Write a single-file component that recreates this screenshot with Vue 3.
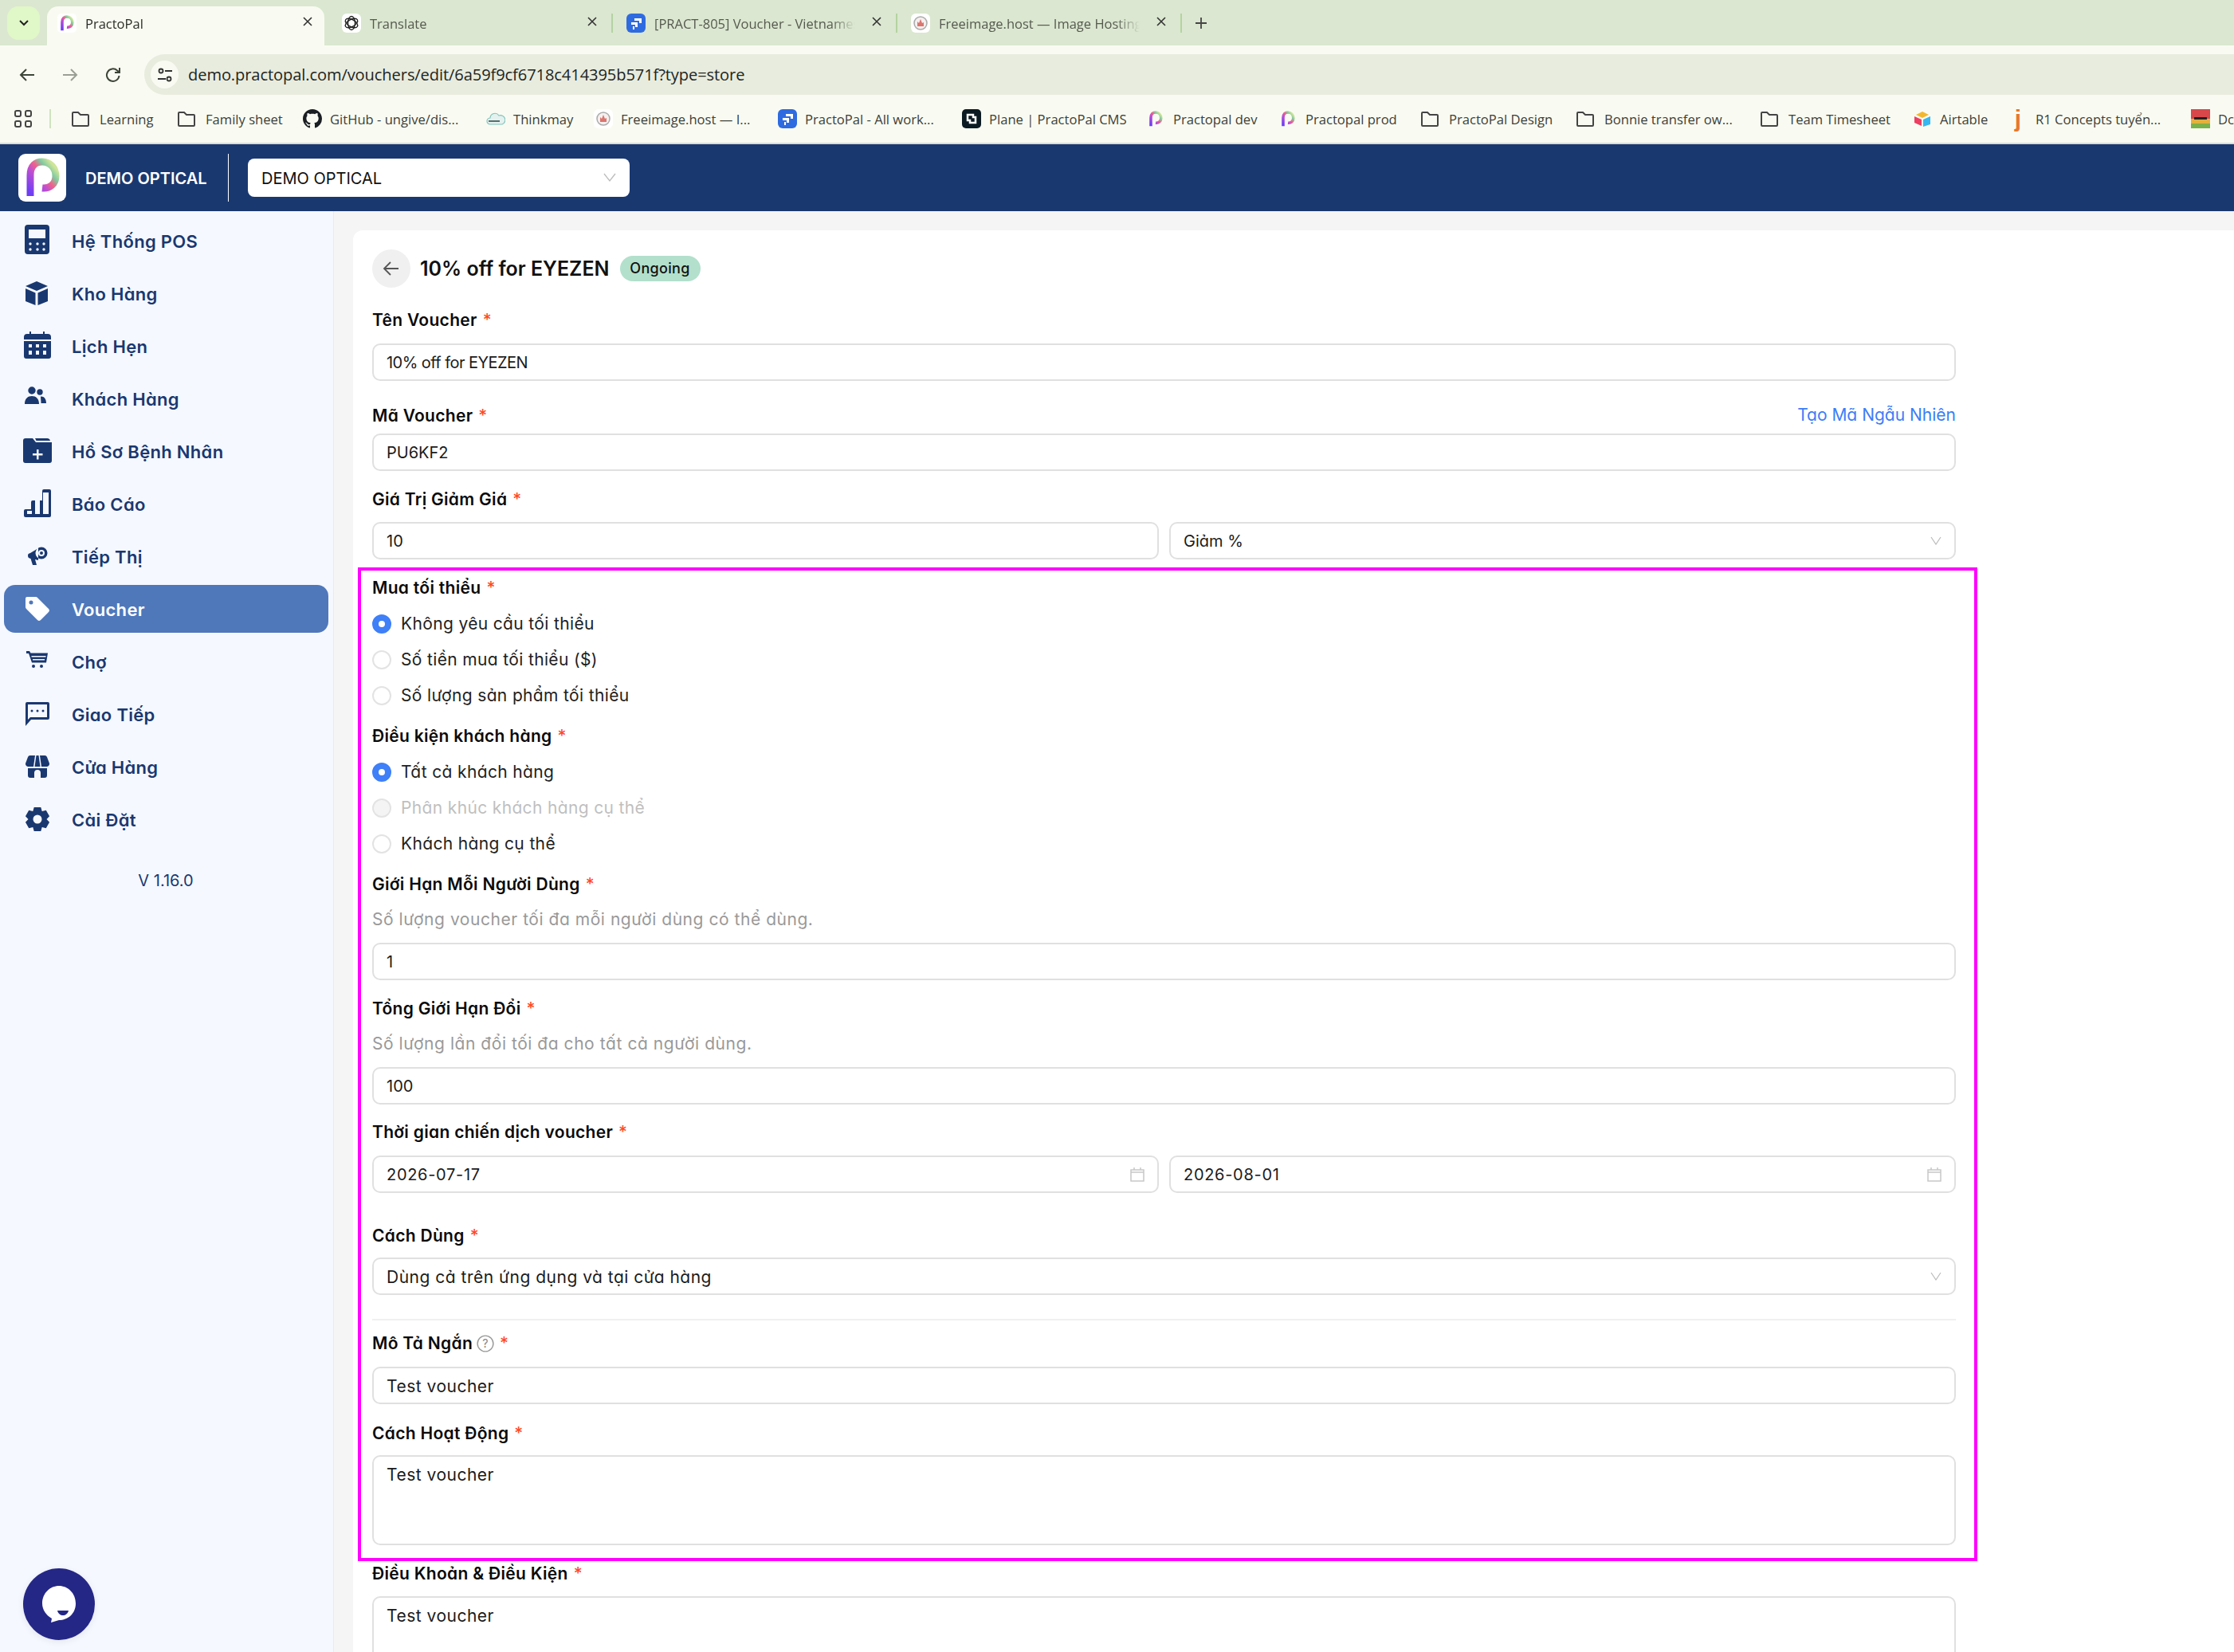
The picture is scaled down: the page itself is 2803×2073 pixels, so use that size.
<script setup>
const dot = (x, y, r) => `M${x - r} ${y}a${r} ${r} 0 1 0 ${2 * r} 0a${r} ${r} 0 1 0 ${-2 * r} 0z`
const gear = () => {
  const pts = []
  for (let i = 0; i < 6; i++) {
    const a = (i * Math.PI) / 3 - Math.PI / 2
    const w = 0.3
    const p = (r, t) => `${(20 + r * Math.cos(t)).toFixed(2)} ${(20 + r * Math.sin(t)).toFixed(2)}`
    pts.push(`${i ? 'L' : 'M'}${p(11.5, a - w - 0.22)}L${p(15.5, a - w + 0.02)}L${p(15.5, a + w - 0.02)}L${p(11.5, a + w + 0.22)}`)
  }
  return pts.join('') + 'z' + dot(20, 20, 5.5)
}
const nav = [
  { t: 'Hệ Thống POS', d: 'M8 0h23a4 4 0 0 1 4 4v29a4 4 0 0 1-4 4H8a4 4 0 0 1-4-4V4a4 4 0 0 1 4-4zM9 6h21v11H9z' + dot(11, 24, 1.7) + dot(20, 24, 1.7) + dot(28, 24, 1.7) + dot(11, 31, 1.7) + dot(20, 31, 1.7) + dot(28, 31, 1.7) },
  { t: 'Kho Hàng', d: 'M19 5L33 11L19 17L5 11zM5 14L17.5 19.5V35L5 30zM33 14L20.5 19.5V35L33 30z' },
  { t: 'Lịch Hẹn', d: 'M3 9a4 4 0 0 1 4-4h3V2h2v3h15V2h2v3h4a4 4 0 0 1 4 4v3H3zM3 14h34v19a3 3 0 0 1-3 3H6a3 3 0 0 1-3-3zM9 18v4h4v-4zM18 18v4h4v-4zM27 18v4h4v-4zM9 26v5h4v-5zM18 26v5h4v-5zM27 26v5h4v-5z' },
  { t: 'Khách Hàng', d: dot(13, 10, 4.7) + 'M4 27c0-7 4-10 9-10s9 3 9 10z' + dot(23, 12, 3.7) + 'M24 17.5c4-.5 7 2.5 7 8.5h-6.5c0-3-.5-6-.5-8.5z' },
  { t: 'Hồ Sơ Bệnh Nhân', d: 'M2 7a3 3 0 0 1 3-3h9l4 5h20v23a3 3 0 0 1-3 3H5a3 3 0 0 1-3-3zM19 18h2.500v5h5v2.500h-5v5H19v-5h-5V23h5zM17 4h15a4 4 0 0 1 4 3H18.500z' },
  { t: 'Báo Cáo', d: 'M26 4a2 2 0 0 1 2-2h7a2 2 0 0 1 2 2v31a2 2 0 0 1-2 2H5a2 2 0 0 1-2-2v-6a2 2 0 0 1 2-2h7v-9a2 2 0 0 1 2-2h12zM7 29v4h6v-4zM17 16v17h6V16zM27 6v27h7V6z' },
  { t: 'Tiếp Thị', d: 'M8 19c0-2 1-2.500 3-3L21 10v15L17 24l2 7h-5l-2.500-8L10 22.500C8.500 22 8 21 8 19z' + dot(25, 16, 7.5) + dot(25, 16, 4) + dot(25, 16, 2) },
  { t: 'Voucher', active: true, d: 'M7 5h11a3 3 0 0 1 2 1l14 14a3 3 0 0 1 0 4L24 34a3 3 0 0 1-4 0L6 20a3 3 0 0 1-1-2V7a2 2 0 0 1 2-2z' + dot(12, 12, 2.5) },
  { t: 'Chợ', d: 'M6 7h4l1.500 2.500H33l-2 12H13L9 10H6zM12.500 13h18v1.500h-18zM14 17h15v1.500H14z' + dot(15, 26, 2) + dot(25, 26, 2) },
  { t: 'Giao Tiếp', d: 'M7 5h26a2 2 0 0 1 2 2v18a2 2 0 0 1-2 2H12l-7 8V7a2 2 0 0 1 2-2zM8 8v19l3-3h21V8z' + dot(13, 16, 1.5) + dot(20, 16, 1.5) + dot(27, 16, 1.5) },
  { t: 'Cửa Hàng', d: 'M11 6h18a3 3 0 0 1 3 2l3 8a3.500 3.500 0 0 1-3.500 4h-23A3.500 3.500 0 0 1 5 16l3-8a3 3 0 0 1 3-2zM17 6h1.500l-2 14H15zM21.500 6H23l2 14h-1.500zM8 22h24v9a3 3 0 0 1-3 3H11a3 3 0 0 1-3-3zM16 34v-6a4 4 0 0 1 8 0v6z' },
  { t: 'Cài Đặt', d: gear() },
]
const tabs = [
  { t: 'PractoPal', i: 'p', active: true },
  { t: 'Translate', i: 'gpt' },
  { t: '[PRACT-805] Voucher - Vietnamese', i: 'jira' },
  { t: 'Freeimage.host — Image Hosting', i: 'free' },
]
const marks = [
  { t: 'Learning', i: 'folder', w: 133 },
  { t: 'Family sheet', i: 'folder', w: 158 },
  { t: 'GitHub - ungive/dis...', i: 'gh', w: 230 },
  { t: 'Thinkmay', i: 'think', w: 135 },
  { t: 'Freeimage.host — I...', i: 'free', w: 231 },
  { t: 'PractoPal - All work...', i: 'jira', w: 231 },
  { t: 'Plane | PractoPal CMS', i: 'plane', w: 231 },
  { t: 'Practopal dev', i: 'p', w: 166 },
  { t: 'Practopal prod', i: 'p', w: 178 },
  { t: 'PractoPal Design', i: 'folder', w: 195 },
  { t: 'Bonnie transfer ow...', i: 'folder', w: 231 },
  { t: 'Team Timesheet', i: 'folder', w: 192 },
  { t: 'Airtable', i: 'air', w: 120 },
  { t: 'R1 Concepts tuyển...', i: 'j', w: 229 },
  { t: 'Dc', i: 'dc', w: 50 },
]
</script>

<template>
  <div class="app">
    <svg class="defs" width="0" height="0" aria-hidden="true">
      <defs>
        <linearGradient id="pg" x1="0.1" y1="1" x2="0.9" y2="0.1">
          <stop offset="0" stop-color="#6d3df5" />
          <stop offset="0.42" stop-color="#c04fd0" />
          <stop offset="0.62" stop-color="#f0628a" />
          <stop offset="0.8" stop-color="#7fc9a0" />
          <stop offset="1" stop-color="#cfe59a" />
        </linearGradient>
        <symbol id="plogo" viewBox="0 0 60 60">
          <path d="M15 53V27C15 15 22 10 30 10C40 10 47 18 47 28C47 38 39 44 30 43" fill="none" stroke="url(#pg)" stroke-width="9" />
        </symbol>
        <symbol id="jira" viewBox="0 0 24 24">
          <rect width="24" height="24" rx="6" fill="#2f6be0" />
          <path d="M10 6h9v6h-3V9h-6zM6 11h8v6h-3v-3H6zM8 16h2v4H8z" fill="#fff" />
        </symbol>
        <symbol id="free" viewBox="0 0 24 24">
          <rect width="24" height="24" rx="6" fill="#fff" />
          <circle cx="12" cy="12" r="8" fill="#f6efef" stroke="#aaa" stroke-width="1.500" />
          <path d="M8 16V10l2 2 2-5 2 5 2-1v5z" fill="#d9766f" />
        </symbol>
        <symbol id="gpt" viewBox="0 0 24 24">
          <rect width="24" height="24" rx="6" fill="#fff" />
          <g fill="none" stroke="#222" stroke-width="1.400">
            <ellipse cx="12" cy="12" rx="4.500" ry="8.500" />
            <ellipse cx="12" cy="12" rx="4.500" ry="8.500" transform="rotate(60 12 12)" />
            <ellipse cx="12" cy="12" rx="4.500" ry="8.500" transform="rotate(120 12 12)" />
          </g>
        </symbol>
        <symbol id="folder" viewBox="0 0 24 24">
          <path d="M2 5a1 1 0 0 1 1-1h6l3 3h9a1 1 0 0 1 1 1v12a1 1 0 0 1-1 1H3a1 1 0 0 1-1-1z" fill="none" stroke="#444" stroke-width="2" />
        </symbol>
        <symbol id="gh" viewBox="0 0 16 16">
          <path fill="#1b1f24" d="M8 0C3.58 0 0 3.58 0 8c0 3.54 2.290 6.530 5.470 7.590.4.070.55-.17.55-.38 0-.19-.01-.82-.01-1.490-2.010.37-2.530-.49-2.690-.94-.09-.23-.48-.94-.82-1.130-.28-.15-.68-.52-.01-.53.63-.01 1.080.58 1.230.82.72 1.210 1.870.87 2.330.66.070-.52.28-.87.51-1.070-1.780-.2-3.640-.89-3.640-3.950 0-.87.31-1.590.82-2.150-.08-.2-.36-1.020.08-2.120 0 0 .67-.21 2.200.82.64-.18 1.320-.27 2-.27.68 0 1.360.09 2 .27 1.530-1.040 2.200-.82 2.200-.82.44 1.100.16 1.920.08 2.120.51.56.82 1.270.82 2.150 0 3.070-1.870 3.750-3.650 3.950.29.25.54.73.54 1.480 0 1.070-.01 1.930-.01 2.200 0 .21.15.46.55.38A8.013 8.013 0 0 0 16 8c0-4.420-3.580-8-8-8z" />
        </symbol>
        <symbol id="think" viewBox="0 0 24 24">
          <path d="M5 19a4 4 0 0 1 0-8 6 6 0 0 1 11-3 5 5 0 0 1 4 11z" fill="#e4f1ef" stroke="#7fc4bb" stroke-width="1.200" />
          <path d="M3 14h14v2H3z" fill="#55716d" />
        </symbol>
        <symbol id="plane" viewBox="0 0 24 24">
          <rect width="24" height="24" rx="5" fill="#0c1b23" />
          <path d="M7 7h7v3h3v7h-7v-3H7z" fill="none" stroke="#fff" stroke-width="2.500" />
        </symbol>
        <symbol id="air" viewBox="0 0 24 24">
          <path d="M12 3l8 4-8 4-8-4z" fill="#f3b72e" />
          <path d="M13 13l9-4v10l-9 3z" fill="#36b7f0" />
          <path d="M2 9l9 4v8L2 17z" fill="#ec3f62" />
        </symbol>
        <symbol id="dc" viewBox="0 0 24 24">
          <rect width="24" height="12" fill="#d8474a" />
          <rect y="12" width="24" height="6" fill="#e3b13d" />
          <rect y="18" width="24" height="6" fill="#7bb04a" />
          <rect x="4" y="10" width="16" height="3" fill="#222" />
        </symbol>
      </defs>
    </svg>

    <div class="tabstrip">
      <div class="groupbtn">
        <svg width="14" height="10" viewBox="0 0 14 10"><path d="M2 2l5 5 5-5" fill="none" stroke="#222" stroke-width="2" /></svg>
      </div>
      <div v-for="(tab, n) in tabs" :key="tab.t" class="tab" :class="{ on: tab.active, sep: n > 0 }">
        <svg class="tabicon"><use :href="'#' + (tab.i === 'p' ? 'plogo' : tab.i)" /></svg>
        <span class="tabtext">{{ tab.t }}</span>
        <svg class="tabx" width="14" height="14" viewBox="0 0 14 14"><path d="M2 2l10 10M12 2L2 12" stroke="#333" stroke-width="1.600" /></svg>
      </div>
      <svg class="plus" width="16" height="16" viewBox="0 0 16 16"><path d="M8 1v14M1 8h14" stroke="#444" stroke-width="1.800" /></svg>
    </div>

    <div class="toolbar">
      <svg class="tbi" width="24" height="24" viewBox="0 0 24 24"><path d="M21 12H4M11 5l-7 7 7 7" fill="none" stroke="#3d4438" stroke-width="2" /></svg>
      <svg class="tbi" width="24" height="24" viewBox="0 0 24 24"><path d="M3 12h17M13 5l7 7-7 7" fill="none" stroke="#9a9f94" stroke-width="2" /></svg>
      <svg class="tbi" width="24" height="24" viewBox="0 0 24 24"><path d="M19.500 13a7.800 7.800 0 1 1-2.400-6.500L20 9M20 3v6h-6" fill="none" stroke="#3d4438" stroke-width="2" /></svg>
      <div class="addr">
        <div class="chip">
          <svg width="22" height="22" viewBox="0 0 22 22"><g fill="none" stroke="#333" stroke-width="1.800"><circle cx="6" cy="6" r="2.500" /><circle cx="16" cy="16" r="2.500" /><path d="M11 6h9M2 16h10" /></g></svg>
        </div>
        <span class="url">demo.practopal.com/vouchers/edit/6a59f9cf6718c414395b571f?type=store</span>
      </div>
    </div>

    <div class="bookmarks">
      <svg class="apps" width="22" height="22" viewBox="0 0 22 22"><g fill="none" stroke="#444" stroke-width="2"><rect x="1" y="1" width="7" height="7" rx="2" /><rect x="14" y="1" width="7" height="7" rx="2" /><rect x="1" y="14" width="7" height="7" rx="2" /><rect x="14" y="14" width="7" height="7" rx="2" /></g></svg>
      <span class="bmsep"></span>
      <div v-for="m in marks" :key="m.t" class="mark" :class="{ fold: m.i === 'folder' }" :style="{ width: m.w + 'px' }">
        <span v-if="m.i === 'j'" class="jmark">j</span>
        <svg v-else class="markicon"><use :href="'#' + (m.i === 'p' ? 'plogo' : m.i)" /></svg>
        <span class="marktext">{{ m.t }}</span>
      </div>
    </div>

    <header class="topnav">
      <div class="logo"><svg width="60" height="60"><use href="#plogo" /></svg></div>
      <span class="brand">DEMO OPTICAL</span>
      <span class="navsep"></span>
      <div class="storeselect">
        <span>DEMO OPTICAL</span>
        <svg width="16" height="12" viewBox="0 0 16 12"><path d="M1 1l7 9 7-9" fill="none" stroke="#bbb" stroke-width="1.300" /></svg>
      </div>
    </header>

    <div class="body">
      <aside class="sidebar">
        <div v-for="item in nav" :key="item.t" class="navitem" :class="{ active: item.active }">
          <svg class="navicon" width="40" height="40" viewBox="0 0 40 40"><path :d="item.d" fill-rule="evenodd" /></svg>
          <span>{{ item.t }}</span>
        </div>
        <div class="version">V 1.16.0</div>
        <div class="chat">
          <svg width="44" height="48" viewBox="0 0 44 48">
            <path d="M22 1C33 1 43 10 43 23S33 44 22 44l-10 3 1-5C6 38 1 31 1 23 1 10 11 1 22 1z" fill="#fff" />
            <path d="M20 32h14c-1 4-4 6-7 6s-6-2-7-6z" fill="#252786" />
          </svg>
        </div>
      </aside>

      <main class="main">
        <div class="card">
          <div class="head">
            <div class="back"><svg width="24" height="24" viewBox="0 0 24 24"><path d="M21 12H3M11 4l-8 8 8 8" fill="none" stroke="#555" stroke-width="1.800" /></svg></div>
            <h1>10% off for EYEZEN</h1>
            <span class="badge">Ongoing</span>
          </div>

          <label class="lbl m26">Tên Voucher<i>*</i></label>
          <div class="inp caps m16">10% off for EYEZEN</div>

          <div class="lblrow m29">
            <label class="lbl">Mã Voucher<i>*</i></label>
            <a class="link">Tạo Mã Ngẫu Nhiên</a>
          </div>
          <div class="inp plain m9">PU6KF2</div>

          <label class="lbl m21">Giá Trị Giảm Giá<i>*</i></label>
          <div class="two m15">
            <div class="inp plain">10</div>
            <div class="inp plain between">Giảm %<svg class="chev" width="14" height="11" viewBox="0 0 14 11"><path d="M1 1l6 9 6-9" fill="none" stroke="#bbb" stroke-width="1.200" /></svg></div>
          </div>

          <label class="lbl m21">Mua tối thiểu<i>*</i></label>
          <div class="radios m9">
            <div class="radio"><b class="dot on"></b>Không yêu cầu tối thiểu</div>
            <div class="radio"><b class="dot"></b>Số tiền mua tối thiểu ($)</div>
            <div class="radio"><b class="dot"></b>Số lượng sản phẩm tối thiểu</div>
          </div>

          <label class="lbl m14">Điều kiện khách hàng<i>*</i></label>
          <div class="radios m9">
            <div class="radio"><b class="dot on"></b>Tất cả khách hàng</div>
            <div class="radio off"><b class="dot"></b>Phân khúc khách hàng cụ thể</div>
            <div class="radio"><b class="dot"></b>Khách hàng cụ thể</div>
          </div>

          <label class="lbl m14">Giới Hạn Mỗi Người Dùng<i>*</i></label>
          <p class="help m17">Số lượng voucher tối đa mỗi người dùng có thể dùng.</p>
          <div class="inp plain m15">1</div>

          <label class="lbl m21">Tổng Giới Hạn Đổi<i>*</i></label>
          <p class="help m17">Số lượng lần đổi tối đa cho tất cả người dùng.</p>
          <div class="inp plain m15">100</div>

          <label class="lbl m20">Thời gian chiến dịch voucher<i>*</i></label>
          <div class="two m16">
            <div class="inp nums between">2026-07-17<svg class="cal" width="18" height="19" viewBox="0 0 18 19"><path d="M1 4h16v14H1zM1 7h16M5 1v3M13 1v3" fill="none" stroke="#c8c8c8" stroke-width="1.500" /></svg></div>
            <div class="inp nums between">2026-08-01<svg class="cal" width="18" height="19" viewBox="0 0 18 19"><path d="M1 4h16v14H1zM1 7h16M5 1v3M13 1v3" fill="none" stroke="#c8c8c8" stroke-width="1.500" /></svg></div>
          </div>

          <label class="lbl m39">Cách Dùng<i>*</i></label>
          <div class="inp between m14">Dùng cả trên ứng dụng và tại cửa hàng<svg class="chev" width="14" height="11" viewBox="0 0 14 11"><path d="M1 1l6 9 6-9" fill="none" stroke="#bbb" stroke-width="1.200" /></svg></div>

          <hr class="rule" />

          <label class="lbl m14">Mô Tả Ngắn<svg class="q" width="22" height="22" viewBox="0 0 20 20"><circle cx="10" cy="10" r="9" fill="none" stroke="#999" stroke-width="1.300" /><text x="10" y="14.500" text-anchor="middle" font-size="13" font-weight="400" fill="#888">?</text></svg><i>*</i></label>
          <div class="inp m16">Test voucher</div>

          <label class="lbl m22">Cách Hoạt Động<i>*</i></label>
          <div class="inp area m14">Test voucher</div>

          <label class="lbl m21">Điều Khoản &amp; Điều Kiện<i>*</i></label>
          <div class="inp area m15">Test voucher</div>
        </div>
      </main>
    </div>

    <div class="highlight"></div>
  </div>
</template>

<style>
html, body { margin: 0; overflow: hidden; }
</style>

<style scoped>
.app { position: relative; width: 2803px; height: 2073px; overflow: hidden; background: #f5f5f5; font-family: Inter, "Noto Sans", sans-serif; font-feature-settings: "cv11"; }
.defs { position: absolute; }

.tabstrip { height: 57px; background: #dbe7d0; display: flex; align-items: flex-start; font-family: "Open Sans", sans-serif; font-feature-settings: normal; position: relative; }
.groupbtn { width: 41px; height: 42px; margin: 8px 5px 0 9px; background: #e0f7c8; border-radius: 14px; display: flex; align-items: center; justify-content: center; }
.tab { position: relative; width: 357px; height: 49px; margin-top: 8px; box-sizing: border-box; padding: 9px 0 0 17px; display: flex; align-items: flex-start; font-size: 16.500px; color: #55594f; }
.tab.on { color: #2a2d26; }
.tab.on::before { content: ""; position: absolute; left: 4px; right: 5px; top: 0; bottom: 0; background: #f9fbf2; border-radius: 14px 14px 0 0; }
.tab.sep::after { content: ""; position: absolute; right: 0; top: 9px; height: 24px; width: 2px; background: #b4d3a0; }
.tab > * { position: relative; }
.tabicon { width: 24px; height: 24px; flex: none; }
.tab.on .tabicon { background: #fff; border-radius: 5px; }
.tabtext { width: 252px; margin-left: 11px; line-height: 26px; white-space: nowrap; overflow: hidden; -webkit-mask-image: linear-gradient(90deg, #000 88%, transparent); mask-image: linear-gradient(90deg, #000 88%, transparent); }
.tabx { margin-left: 20px; margin-top: 3px; flex: none; }
.plus { margin: 21px 0 0 16px; flex: none; }

.toolbar { height: 62px; background: #f9fbf2; display: flex; align-items: flex-start; padding: 11px 0 0 22px; box-sizing: border-box; }
.tbi { margin: 14px 30px 0 0; flex: none; }
.tbi:nth-child(3) { margin-right: 27px; }
.addr { flex: 1; height: 51px; background: #e8ecde; border-radius: 26px 0 0 26px; display: flex; align-items: center; padding-left: 8px; margin-left: 0; }
.chip { width: 35px; height: 35px; border-radius: 18px; background: #f9fbf2; display: flex; align-items: center; justify-content: center; margin-right: 12px; }
.url { font: 400 20.100px "Open Sans", sans-serif; color: #22251f; white-space: nowrap; letter-spacing: -0.1px; }

.bookmarks { height: 62px; box-sizing: border-box; background: #f9fbf2; border-bottom: 2px solid #dcdcd6; display: flex; align-items: center; padding-left: 18px; font: 400 16.600px "Open Sans", sans-serif; color: #3d4038; white-space: nowrap; }
.apps { flex: none; }
.bmsep { width: 2px; height: 24px; background: #cfe3bf; margin: 0 25px 0 22px; flex: none; }
.mark { display: flex; align-items: center; flex: none; }
.markicon { width: 24px; height: 24px; flex: none; margin-right: 10px; }
.fold .markicon { margin-right: 12px; }
.jmark { width: 24px; flex: none; margin-right: 10px; color: #e8772e; font: 700 30px "Liberation Sans", sans-serif; line-height: 34px; text-align: center; }

.topnav { height: 84px; background: #1a3870; display: flex; align-items: center; padding-left: 23px; }
.logo { width: 60px; height: 60px; background: #fff; border-radius: 9px; flex: none; }
.brand { margin-left: 24px; width: 155px; color: #fff; font-size: 20px; font-weight: 600; white-space: nowrap; padding-top: 2px; }
.navsep { width: 1px; height: 60px; background: #fff; margin: 0 24px; flex: none; }
.storeselect { width: 479px; height: 48px; margin-left: 0; box-sizing: border-box; background: #fff; border-radius: 8px; display: flex; align-items: center; justify-content: space-between; padding: 0 17px 0 17px; font-size: 20px; color: #111; }
.storeselect span { padding-top: 2px; }

.body { display: flex; height: 1808px; }
.sidebar { position: relative; width: 419px; flex: none; box-sizing: border-box; background: #f5f8ff; border-right: 1px solid #e8ebf2; padding: 7px 6px 0 5px; }
.navitem { height: 60px; margin-bottom: 6px; display: flex; align-items: center; padding-left: 22px; border-radius: 14px; color: #1a3870; font-size: 22px; font-weight: 600; letter-spacing: 0.3px; }
.navitem span { padding-top: 1px; }
.navicon { fill: #1a3870; flex: none; margin-right: 23px; }
.navitem.active { background: #4f78bb; color: #fff; }
.navitem.active .navicon { fill: #fff; }
.version { margin-top: 35px; text-align: center; width: 406px; font-size: 20px; color: #1a3870; }
.chat { position: absolute; left: 29px; top: 1703px; width: 90px; height: 90px; border-radius: 50%; background: #252786; display: flex; align-items: center; justify-content: center; box-shadow: 0 2px 8px rgba(0,0,0,.08); }

.main { flex: 1; padding: 24px 0 0 24px; min-width: 0; }
.card { background: #fff; border-radius: 12px 0 0 0; padding: 24px 349px 0 24px; height: 1900px; box-sizing: border-box; color: #111; }
.head { display: flex; align-items: center; height: 48px; }
.back { width: 48px; height: 48px; border-radius: 50%; background: #f0f0f0; display: flex; align-items: center; justify-content: center; flex: none; }
h1 { margin: 0 0 0 12px; font-size: 25px; font-weight: 600; white-space: nowrap; line-height: 48px; color: #111; }
.badge { margin-left: 13px; width: 101px; height: 32px; text-align: center; line-height: 32px; background: #b2e0cc; border-radius: 16px; font-size: 18px; font-weight: 500; color: #111; letter-spacing: .3px; }

.lbl { display: block; height: 28px; line-height: 29px; font-size: 21px; letter-spacing: .3px; font-weight: 600; color: #0b0b0b; white-space: nowrap; }
.lbl i { font-style: normal; color: #ff4a26; margin-left: 7px; font-weight: 500; }
.lblrow { display: flex; justify-content: space-between; }
.link { font-size: 21px; line-height: 28px; color: #3b7df8; }
.inp { height: 47px; box-sizing: border-box; border: 2px solid #e0e0e0; border-radius: 10px; padding: 0 16px; line-height: 45px; font-size: 21px; letter-spacing: .5px; color: #1b1b1b; background: #fff; white-space: nowrap; }
.inp.caps { font-size: 20px; letter-spacing: -.55px; }
.inp.plain { font-size: 20px; letter-spacing: 0; }
.inp.nums { font-size: 20px; letter-spacing: .7px; }
.between { display: flex; align-items: center; justify-content: space-between; padding-top: 2px; }
.chev { flex: none; margin-top: -2px; }
.cal { flex: none; margin-top: -2px; }
.area { height: 113px; }
.two { display: flex; gap: 13px; }
.two > .inp { flex: 1; min-width: 0; }
.radio { height: 45px; display: flex; align-items: center; font-size: 21px; letter-spacing: .35px; color: #222; }
.radio.off { color: #bfbfbf; }
.radio.off .dot { background: #f4f4f4; }
.dot { width: 24px; height: 24px; box-sizing: border-box; border: 2px solid #e3e3e3; border-radius: 50%; margin-right: 12px; flex: none; background: #fff; }
.dot.on { border: 8px solid #3f7ff8; }
.help { margin: 0; height: 28px; line-height: 28px; font-size: 21px; letter-spacing: .54px; color: #999; white-space: nowrap; }
.rule { border: 0; height: 2px; background: #f0f0f0; margin: 30px 0 0; }
.q { vertical-align: -4px; margin-left: 5px; }
.q + i { margin-left: 7px; }

.m9 { margin-top: 9px; }
.m14 { margin-top: 14px; }
.m15 { margin-top: 15px; }
.m16 { margin-top: 16px; }
.m17 { margin-top: 17px; }
.m20 { margin-top: 20px; }
.m21 { margin-top: 21px; }
.m22 { margin-top: 22px; }
.m26 { margin-top: 26px; }
.m29 { margin-top: 29px; }
.m39 { margin-top: 39px; }

.highlight { position: absolute; left: 449px; top: 712px; width: 2032px; height: 1247px; box-sizing: border-box; border: 4px solid #ff00ff; pointer-events: none; }
</style>
